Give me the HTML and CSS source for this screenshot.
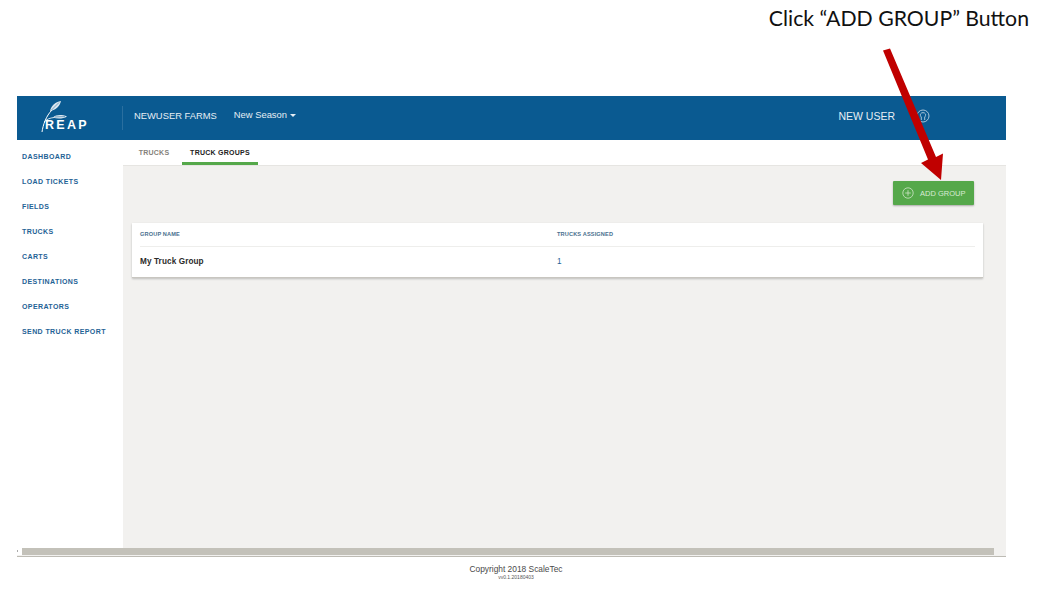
FILE: index.html
```html
<!DOCTYPE html>
<html lang="en">
<head>
<meta charset="utf-8">
<title>REAP - Truck Groups</title>
<link rel="stylesheet" href="styles.css">
</head>
<body>
<div class="caption">Click “ADD GROUP” Button</div>
<div class="app">
  <header class="topbar">
    <div class="logo">
      <svg class="logo-art" width="50" height="32" viewBox="0 0 50 32" aria-hidden="true">
        <path d="M3 31 C4 24 7 15 13 9" fill="none" stroke="#fff" stroke-width="1"/>
        <path d="M11 10 C12 5 16 1 22 0 C21 5 17 9 11 10Z" fill="#dbe6ef"/>
        <path d="M12.5 9 L20 1.5" stroke="#0a5a91" stroke-width="0.5"/>
        <path d="M5 21 C8 18 11 17 15 16.5" fill="none" stroke="#fff" stroke-width="0.8"/>
        <path d="M14 16.5 C17 13.5 23 13.5 28 15.5 C24 18 18 18 14 16.5Z" fill="#dbe6ef"/>
        <path d="M16 16 L26 15.5" stroke="#0a5a91" stroke-width="0.5"/>
      </svg>
      <span class="logo-word">REAP</span>
    </div>
    <div class="divider"></div>
    <span class="farm">NEWUSER FARMS</span>
    <span class="season">New Season<i class="caret"></i></span>
    <span class="user">NEW USER</span>
    <svg class="user-icon" width="14" height="14" viewBox="0 0 14 14" aria-hidden="true">
      <circle cx="7" cy="7" r="6" fill="none" stroke="#b9cfe0" stroke-width="0.9"/>
      <path d="M5.3 11 V8 C4.3 7 4.2 5.8 4.6 4.9 C5.4 3.2 8.6 3.2 9.4 4.9 C9.8 5.8 9.7 7 8.7 8 V11" fill="none" stroke="#b9cfe0" stroke-width="0.9"/>
    </svg>
  </header>
  <div class="body">
    <nav class="sidebar">
      <a class="nav-item">DASHBOARD</a>
      <a class="nav-item">LOAD TICKETS</a>
      <a class="nav-item">FIELDS</a>
      <a class="nav-item">TRUCKS</a>
      <a class="nav-item">CARTS</a>
      <a class="nav-item">DESTINATIONS</a>
      <a class="nav-item">OPERATORS</a>
      <a class="nav-item">SEND TRUCK REPORT</a>
    </nav>
    <main class="main">
      <div class="tabs">
        <span class="tab tab-first">TRUCKS</span>
        <span class="tab tab-active">TRUCK GROUPS</span>
      </div>
      <div class="content">
        <div class="actions">
          <button class="add-btn">
            <svg width="12" height="12" viewBox="0 0 12 12" aria-hidden="true">
              <circle cx="6" cy="6" r="5.2" fill="none" stroke="#cfe5c9" stroke-width="0.8"/>
              <path d="M6 3.2V8.8M3.2 6H8.8" stroke="#cfe5c9" stroke-width="0.8"/>
            </svg>
            ADD GROUP
          </button>
        </div>
        <section class="card">
          <div class="row row-head">
            <span class="col-name">GROUP NAME</span>
            <span>TRUCKS ASSIGNED</span>
          </div>
          <div class="row row-data">
            <span class="col-name group-name">My Truck Group</span>
            <span class="count">1</span>
          </div>
        </section>
      </div>
    </main>
  </div>
  <div class="scrollbar">
    <span class="scroll-arrow"></span>
    <span class="scroll-thumb"></span>
  </div>
</div>
<footer class="footer">
  <div class="copyright">Copyright 2018 ScaleTec</div>
  <div class="version">vv0.1.20180403</div>
</footer>
<svg class="arrow" width="80" height="150" viewBox="0 0 80 150" aria-hidden="true">
  <path d="M2 4.5 L9 2.5 L55 111 L62 107.5 L60 134 L40 117 L47 113.5 Z" fill="#c00000"/>
</svg>
</body>
</html>
```
FILE: styles.css
```css
* { box-sizing: border-box; }
html, body { margin: 0; padding: 0; }
body {
  position: relative;
  width: 1037px;
  height: 616px;
  overflow: hidden;
  background: #fff;
  font-family: "Liberation Sans", Arial, sans-serif;
}
.caption {
  height: 96px;
  padding: 6px 8px 0 0;
  text-align: right;
  font-family: Lato, "Open Sans", sans-serif;
  font-size: 21.25px;
  line-height: 24px;
  color: #111;
}
.app {
  width: 989px;
  margin-left: 17px;
}
.topbar {
  display: flex;
  align-items: center;
  height: 44px;
  background: #0a5a91;
  color: #e6eef4;
}
.logo {
  position: relative;
  width: 105px;
  height: 44px;
  flex: none;
}
.logo-art { position: absolute; left: 22px; top: 5px; }
.logo-word {
  position: absolute;
  left: 28px;
  top: 23px;
  font-size: 12.5px;
  line-height: 13px;
  font-weight: 700;
  letter-spacing: 2.3px;
  color: #fff;
}
.divider {
  width: 1px;
  height: 24px;
  background: #2a6f9f;
  flex: none;
}
.farm { margin-left: 11px; padding-bottom: 5px; font-size: 9.4px; }
.season { margin-left: 17px; padding-bottom: 8px; font-size: 9.4px; }
.caret {
  display: inline-block;
  margin-left: 3px;
  vertical-align: middle;
  border-left: 3px solid transparent;
  border-right: 3px solid transparent;
  border-top: 3px solid #e6eef4;
}
.user { margin-left: auto; padding-bottom: 5px; font-size: 10.5px; }
.user-icon { margin: 0 76px 5px 21px; }
.body { display: flex; height: 408px; }
.sidebar {
  display: flex;
  flex-direction: column;
  width: 106px;
  flex: none;
  padding-top: 5px;
  background: #fff;
}
.nav-item {
  height: 25px;
  padding-left: 5px;
  font-size: 7px;
  line-height: 24px;
  font-weight: 700;
  letter-spacing: 0.4px;
  color: #1f6396;
}
.main { flex: 1; display: flex; flex-direction: column; min-width: 0; }
.tabs {
  display: flex;
  height: 26px;
  padding-left: 7px;
  gap: 1px;
  border-bottom: 1px solid #e6e5e2;
  background: #fff;
}
.tab {
  width: 50px;
  height: 25px;
  padding-top: 8px;
  text-align: center;
  font-size: 7px;
  line-height: 10px;
  font-weight: 700;
  letter-spacing: 0.25px;
  color: #85817a;
}
.tab-first { padding-right: 2px; }
.tab-active {
  width: 76px;
  margin-left: 1px;
  color: #222;
  border-bottom: 3px solid #55a84a;
}
.content {
  flex: 1;
  padding: 15px 23px 0 9px;
  background: #f2f1ef;
}
.actions { display: flex; justify-content: flex-end; padding-right: 9px; }
.add-btn {
  display: flex;
  align-items: center;
  gap: 6px;
  width: 81px;
  height: 24px;
  padding: 0 0 0 9px;
  border: 0;
  border-radius: 1px;
  background: #55a84a;
  box-shadow: 0 1px 2px rgba(0,0,0,.3);
  color: #d8ead4;
  font-family: "Liberation Sans", Arial, sans-serif;
  font-size: 7.5px;
  white-space: nowrap;
}
.card {
  margin-top: 18px;
  height: 55px;
  padding: 0 8px;
  background: #fff;
  border-bottom: 1px solid #c8c6c0;
  box-shadow: 0 1px 2px rgba(0,0,0,.22);
}
.row { display: flex; align-items: center; }
.col-name { width: 417px; flex: none; }
.row-head {
  height: 24px;
  padding-bottom: 2px;
  border-bottom: 1px solid #eeeeec;
  font-size: 5.6px;
  font-weight: 700;
  letter-spacing: 0.15px;
  color: #4a6f8e;
}
.row-data { height: 30px; padding-bottom: 2px; }
.group-name { font-size: 8.2px; font-weight: 700; color: #2b2b2b; letter-spacing: 0.1px; }
.count { font-size: 8.2px; color: #1f6396; }
.scrollbar {
  display: flex;
  align-items: stretch;
  height: 9px;
  padding-bottom: 1px;
  border-bottom: 1px solid #bdbbb4;
  background: #f2f1ef;
}
.scroll-arrow {
  width: 5px;
  background: linear-gradient(#fff 2px, #aaa 2px, #aaa 4px, #fff 4px) no-repeat 0 0 / 1px 100%, #fff;
}
.scroll-thumb { width: 972px; height: 7px; background: #c3c1b9; }
.footer { padding-top: 7px; text-align: center; width: 1032px; }
.copyright { font-size: 8.4px; line-height: 10px; color: #4a4a4a; }
.version { font-size: 5px; line-height: 7px; color: #555; }
.arrow { position: absolute; left: 881px; top: 46px; }
```
